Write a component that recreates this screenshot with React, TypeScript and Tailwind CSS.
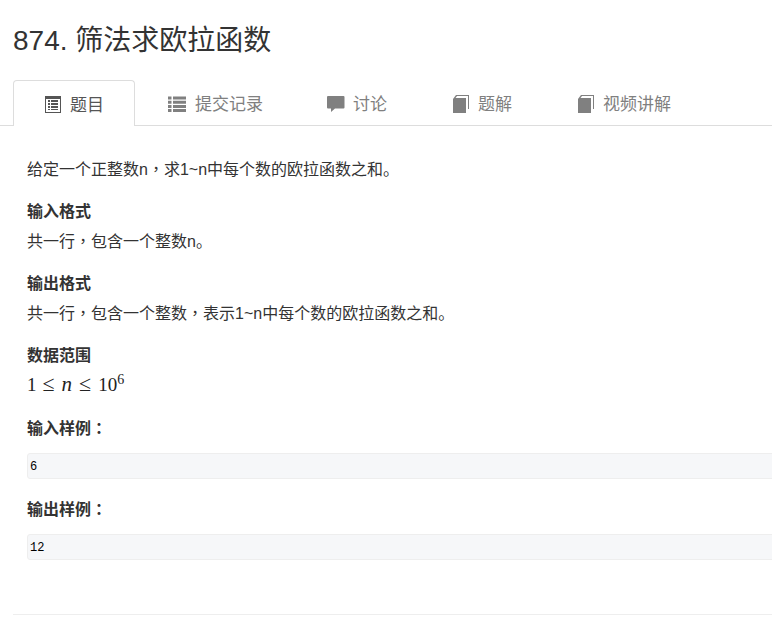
// Problem detail page

const CJK = 'font-["Liberation_Sans","Noto_Sans_CJK_SC",sans-serif]';

function ListAltIcon() {
  return (
    <svg width="16" height="17" viewBox="0 0 16 17" className="shrink-0">
      <rect x="0.5" y="0.5" width="15" height="16" fill="none" stroke="#555" />
      <rect x="1" y="1" width="14" height="2" fill="#555" />
      <path d="M3 4h2v2H3zM6 4h7v2H6zM3 7h2v2H3zM6 7h7v2H6zM3 10h2v2H3zM6 10h7v2H6zM3 13h2v1H3zM6 13h7v1H6z" fill="#555" />
    </svg>
  );
}

function ListIcon() {
  return (
    <svg width="18" height="16" viewBox="0 0 18 16" className="shrink-0">
      <path d="M0 0.500h3.500v3H0zM5 0.500h13v3H5zM0 4.700h3.500v3H0zM5 4.700h13v3H5zM0 8.900h3.500v3H0zM5 8.900h13v3H5zM0 13h3.500v3H0zM5 13h13v3H5z" fill="#808080" />
    </svg>
  );
}

function CommentIcon() {
  return (
    <svg width="18" height="16" viewBox="0 0 18 16" className="shrink-0">
      <path d="M1 0h15.500a1 1 0 0 1 1 1v10.500a1 1 0 0 1-1 1H8l-4 3.500v-3.500H1a1 1 0 0 1-1-1V1a1 1 0 0 1 1-1z" fill="#808080" />
    </svg>
  );
}

function BookIcon() {
  return (
    <svg width="16" height="18" viewBox="0 0 16 18" className="shrink-0">
      <path d="M0 4L3 0h13v14h-1V1H4L2.500 3H13v15H0z" fill="#808080" />
    </svg>
  );
}

const tabs = [
  { label: '提交记录', icon: <ListIcon />, width: 'w-[159px]', gap: 'gap-[9px]' },
  { label: '讨论', icon: <CommentIcon />, width: 'w-[126px]', gap: 'gap-[8px]' },
  { label: '题解', icon: <BookIcon />, width: 'w-[125px]', gap: 'gap-[9px]' },
  { label: '视频讲解', icon: <BookIcon />, width: 'w-[158px]', gap: 'gap-[9px]' },
];

// centred full-width punctuation comes from the TC face
function Punct({ children }: { children: string }) {
  return <span className="font-['Noto_Sans_CJK_TC',sans-serif] leading-[0]">{children}</span>;
}

function Heading({ children }: { children: React.ReactNode }) {
  return <div className="mt-[17px] h-[24px] text-[16px] leading-[26px] font-bold text-[#333]">{children}</div>;
}

function Para({ children }: { children: React.ReactNode }) {
  return <div className="mt-[7px] h-[24px] text-[16px] leading-[24px] text-[#333]">{children}</div>;
}

function Sample({ value }: { value: string }) {
  return (
    <div className="pb-[1px]">
      <pre className="mt-[13px] h-[26px] w-[760px] rounded-[3px] border border-[#eeeeee] bg-[#f6f7f9] pl-[2px] font-['Liberation_Mono',monospace] text-[12px] leading-[26px] text-black">
        {value}
      </pre>
    </div>
  );
}

export default function App() {
  return (
    <div className={`h-[620px] w-[772px] overflow-hidden bg-white ${CJK}`}>
      <h1 className="ml-[13px] pt-[21px] text-[28px] leading-[40px] font-normal text-[#333]">874. 筛法求欧拉函数</h1>

      <div className="mt-[19px] flex h-[46px] border-b border-[#dddddd] pl-[13px]">
        <div className="flex h-[46px] w-[122px] items-center gap-[9px] rounded-t-[4px] border border-b-0 border-[#dddddd] bg-white pt-[2px] pl-[31px] text-[17px] text-[#555]">
          <ListAltIcon />
          <span className="pt-[2px]">题目</span>
        </div>
        {tabs.map((tab) => (
          <div key={tab.label} className={`flex h-[45px] items-center pt-[3px] pl-[33px] text-[17px] text-[#808080] ${tab.gap} ${tab.width}`}>
            {tab.icon}
            <span className="pt-[2px] whitespace-nowrap">{tab.label}</span>
          </div>
        ))}
      </div>

      <div className="pl-[27px]">
        <div className="mt-[32px] h-[24px] text-[16px] leading-[24px] text-[#333]">
          给定一个正整数n<Punct>，</Punct>求1~n中每个数的欧拉函数之和。
        </div>
        <Heading>输入格式</Heading>
        <Para>
          共一行<Punct>，</Punct>包含一个整数n。
        </Para>
        <Heading>输出格式</Heading>
        <Para>
          共一行<Punct>，</Punct>包含一个整数<Punct>，</Punct>表示1~n中每个数的欧拉函数之和。
        </Para>
        <Heading>数据范围</Heading>
        <div className="mt-[3px] flex h-[29px] items-baseline font-['Liberation_Serif',serif] text-[19px] leading-[28px] text-[#222]">
          <span>1</span>
          <span className="ml-[6px] text-[22px]">≤</span>
          <i className="ml-[7px] text-[21px]">n</i>
          <span className="ml-[7px] text-[22px]">≤</span>
          <span className="ml-[7px]">10</span>
          <span className="relative -top-[7px] text-[14px]">6</span>
        </div>
        <Heading>
          输入样例<Punct>：</Punct>
        </Heading>
        <Sample value="6" />
        <Heading>
          输出样例<Punct>：</Punct>
        </Heading>
        <Sample value="12" />
      </div>

      <div className="mt-[53px] ml-[13px] border-t border-[#eeeeee]" />
    </div>
  );
}
